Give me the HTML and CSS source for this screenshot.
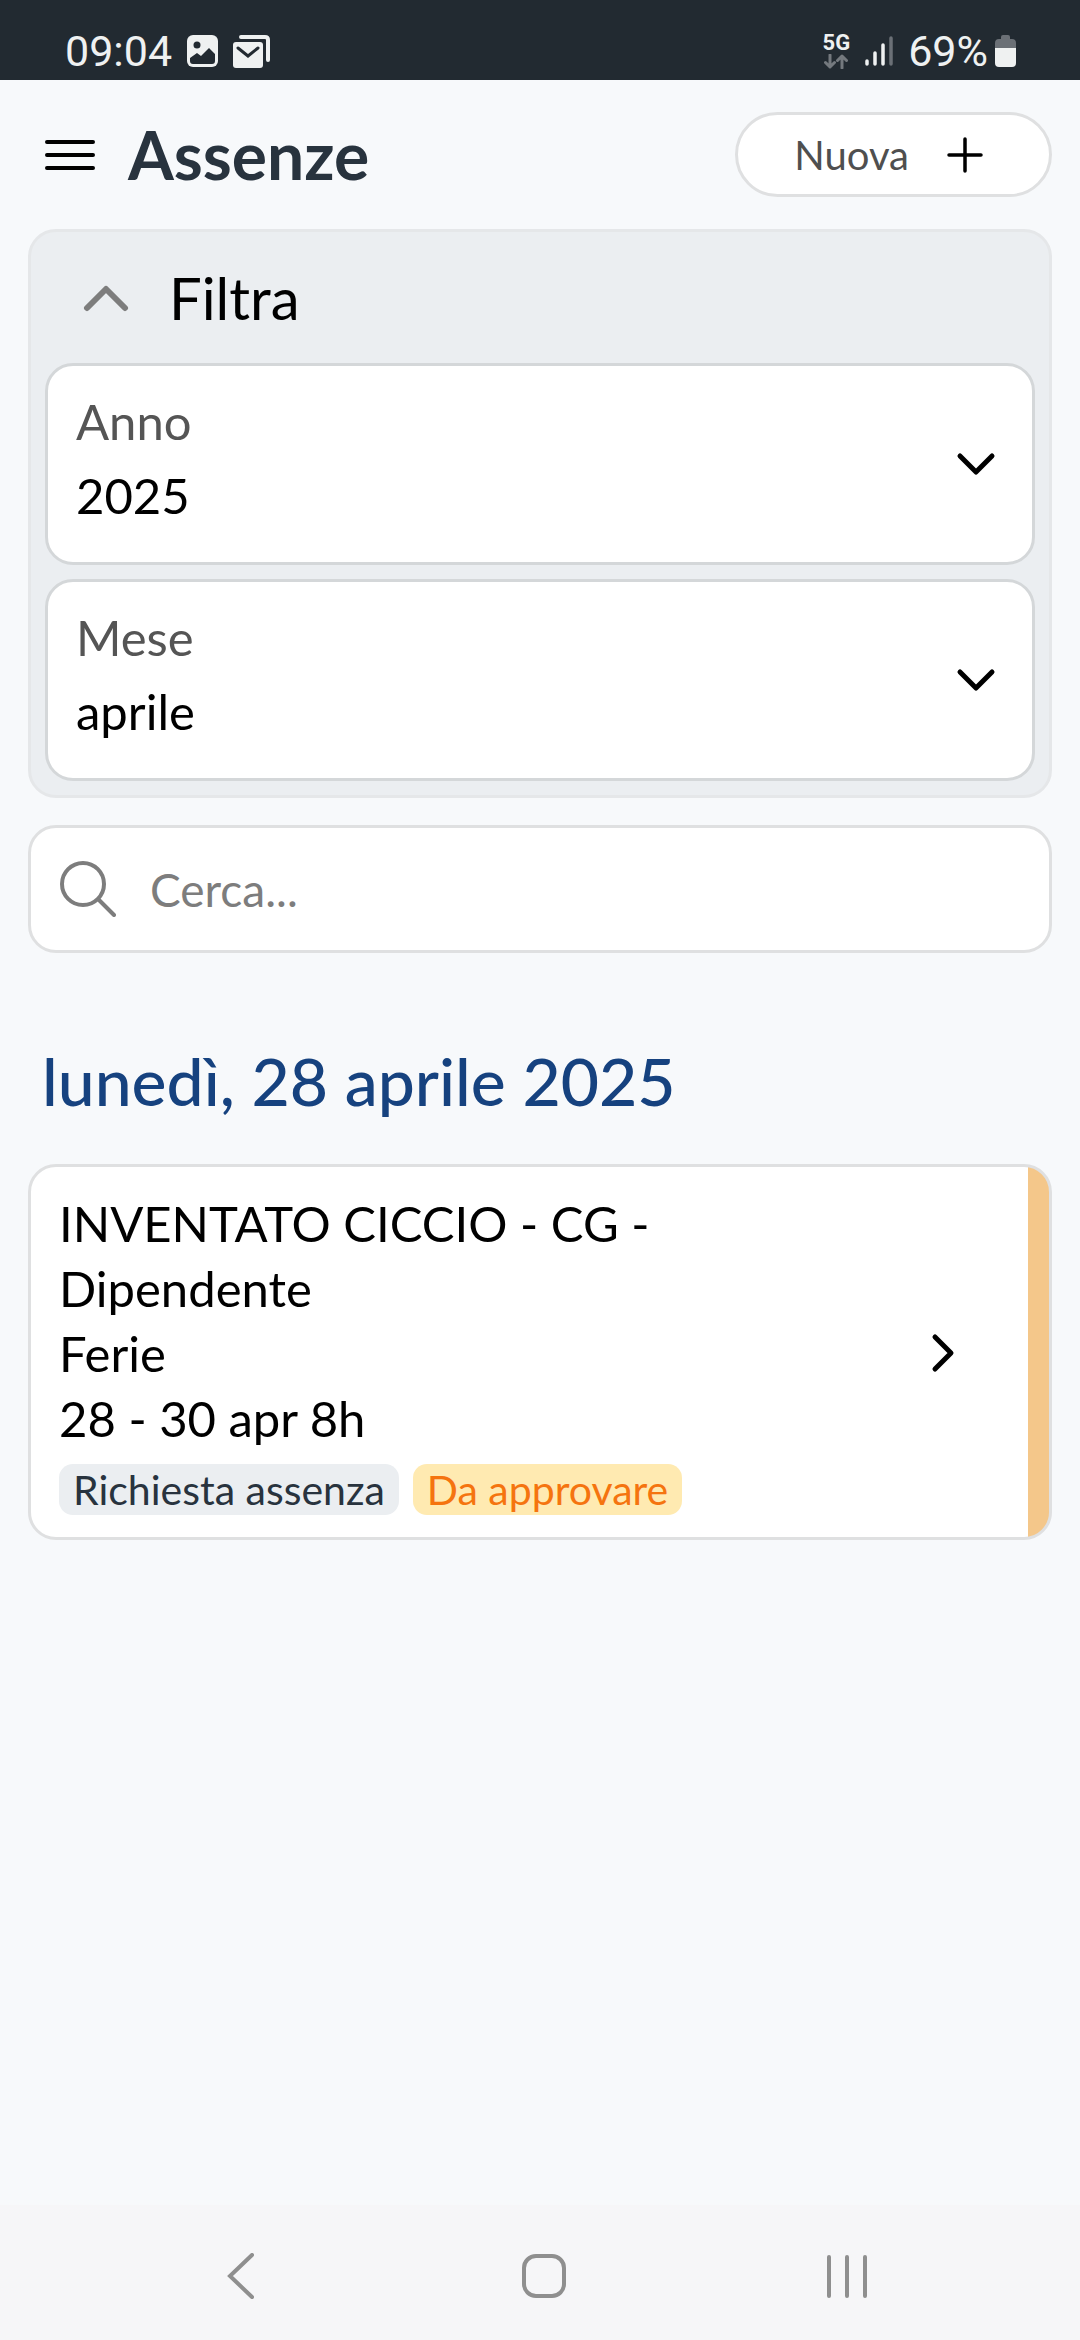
FILE: index.html
```
<!DOCTYPE html>
<html lang="it">

<head>
  <meta charset="UTF-8">
  <meta name="viewport" content="width=device-width, initial-scale=1.0">
  <title>Assenze</title>
  <link rel="stylesheet" href="styles.css">
</head>

<body>

  <div class="statusBar">
    <div class="statusLeft">
      <span>09:04</span>
      <svg width="31" height="32" viewBox="0 0 31 32">
        <rect width="31" height="32" rx="6" fill="#eff1f1"/>
        <circle cx="10" cy="10" r="3.5" fill="#222a31"/>
        <path d="M3 23l7-5 4 3 8-8 6 6v7q0 3-3 3H6q-3 0-3-3z" fill="#222a31"/>
      </svg>
      <svg width="37" height="33" viewBox="0 0 37 33">
        <path d="M8 2h24q3 0 3 3v20" fill="none" stroke="#eff1f1" stroke-width="4" stroke-linecap="round"/>
        <rect y="7" width="30" height="26" rx="3" fill="#eff1f1"/>
        <path d="M5 13l10 8 10-8" fill="none" stroke="#222a31" stroke-width="3" stroke-linecap="round"/>
      </svg>
    </div>
    <div class="statusRight">
      <div class="network">
        <span>5G</span>
        <svg width="24" height="15" viewBox="0 0 24 15" fill="none" stroke="#74797e" stroke-width="3" stroke-linecap="round" stroke-linejoin="round">
          <path d="M6 1v12M1.500 8.500L6 13l4.500-4.500M18 14V2M13.500 6.500L18 2l4.500 4.500"/>
        </svg>
      </div>
      <svg width="28" height="30" viewBox="0 0 28 30" stroke="#eff1f1" stroke-width="3.500" stroke-linecap="round">
        <path d="M2 25v3M10 17v11M18 9v19"/>
        <path d="M26 2v26" stroke="#6b7076"/>
      </svg>
      <span>69%</span>
      <svg class="battery" width="21" height="32" viewBox="0 0 21 32">
        <path d="M6 4V2q0-2 2-2h5q2 0 2 2v2h2q4 0 4 4v5H0V8q0-4 4-4z" fill="#6b7076"/>
        <path d="M0 13h21v15q0 4-4 4H4q-4 0-4-4z" fill="#eff1f1"/>
      </svg>
    </div>
  </div>

  <header>
    <button type="button" class="menuButton" aria-label="Menu">
      <svg width="52" height="32" viewBox="0 0 52 32" stroke="#000" stroke-width="4" stroke-linecap="round">
        <path d="M3 3h46M3 16h46M3 29h46"/>
      </svg>
    </button>
    <h1>Assenze</h1>
    <button type="button" class="newButton">
      Nuova
      <svg width="36" height="36" viewBox="0 0 36 36" stroke="#000" stroke-width="3.500" stroke-linecap="round">
        <path d="M2 18h32M18 2v32"/>
      </svg>
    </button>
  </header>

  <main>
    <section class="filters">
      <button type="button" class="filterToggle" aria-expanded="true">
        <svg width="46" height="28" viewBox="0 0 46 28" fill="none" stroke="#7d7d7d" stroke-width="6" stroke-linecap="round" stroke-linejoin="round">
          <path d="M4 24L23 5l19 19"/>
        </svg>
        Filtra
      </button>

      <div class="field">
        <div class="fieldText">
          <label for="anno">Anno</label>
          <select id="anno" name="anno">
            <option selected>2025</option>
          </select>
        </div>
        <svg width="40" height="24" viewBox="0 0 40 24" fill="none" stroke="#000" stroke-width="5" stroke-linecap="round" stroke-linejoin="round">
          <path d="M4 4l16 16L36 4"/>
        </svg>
      </div>

      <div class="field">
        <div class="fieldText">
          <label for="mese">Mese</label>
          <select id="mese" name="mese">
            <option selected>aprile</option>
          </select>
        </div>
        <svg width="40" height="24" viewBox="0 0 40 24" fill="none" stroke="#000" stroke-width="5" stroke-linecap="round" stroke-linejoin="round">
          <path d="M4 4l16 16L36 4"/>
        </svg>
      </div>
    </section>

    <div class="search">
      <svg width="56" height="56" viewBox="0 0 56 56" fill="none" stroke="#7d7d7d" stroke-width="4" stroke-linecap="round">
        <circle cx="23" cy="23" r="21"/>
        <path d="M39 39l15 15"/>
      </svg>
      <input type="text" id="cerca" name="cerca" placeholder="Cerca..." aria-label="Cerca">
    </div>

    <h2>lunedì, 28 aprile 2025</h2>

    <a href="#" class="absence">
      <div class="absenceText">
        <div>INVENTATO CICCIO - CG - Dipendente</div>
        <div>Ferie</div>
        <div>28 - 30 apr 8h</div>
        <div class="tags">
          <span class="tag">Richiesta assenza</span>
          <span class="tag pending">Da approvare</span>
        </div>
      </div>
      <svg width="24" height="40" viewBox="0 0 24 40" fill="none" stroke="#000" stroke-width="5" stroke-linecap="round" stroke-linejoin="round">
        <path d="M4 4l16 16L4 36"/>
      </svg>
    </a>
  </main>

  <nav>
    <button type="button" aria-label="Indietro">
      <svg width="46" height="46" viewBox="0 0 46 46" fill="none" stroke="#8f8f8f" stroke-width="4" stroke-linecap="round">
        <path d="M34 2L12 23l22 21"/>
      </svg>
    </button>
    <button type="button" aria-label="Home">
      <svg width="46" height="46" viewBox="0 0 46 46" fill="none" stroke="#8f8f8f" stroke-width="4">
        <rect x="3" y="3" width="40" height="40" rx="12"/>
      </svg>
    </button>
    <button type="button" aria-label="Recenti">
      <svg width="46" height="46" viewBox="0 0 46 46" stroke="#8f8f8f" stroke-width="4" stroke-linecap="round">
        <path d="M5 4v39M23 4v39M41 4v39"/>
      </svg>
    </button>
  </nav>

</body>

</html>
```
FILE: styles.css
```
* {
  box-sizing: border-box;
}

body {
  margin: 0;
  min-height: 100vh;
  display: flex;
  flex-direction: column;
  background-color: #f7f9fb;
  color: #000;
  font-family: Lato, "Open Sans", sans-serif;
  font-size: 49px;
}

svg {
  display: block;
  flex-shrink: 0;
}

button {
  padding: 0;
  border: none;
  background: none;
  font-family: inherit;
  color: inherit;
}

/* phone status bar */
.statusBar {
  display: flex;
  justify-content: space-between;
  height: 80px;
  padding: 22px 64px 0 65px;
  background-color: #222a31;
  color: #eff1f1;
  font-family: Roboto, sans-serif;
  font-size: 43px;
}

.statusLeft,
.statusRight {
  display: flex;
  align-items: center;
  gap: 15px;
}

.network {
  display: flex;
  flex-direction: column;
  align-items: center;
  gap: 2px;
  font-size: 22px;
  font-weight: 700;
  line-height: 18px;
}

.battery {
  margin-left: -8px;
}

header {
  display: flex;
  align-items: center;
  padding: 32px 28px;
}

.menuButton {
  padding: 0 16px;
}

h1 {
  margin: 0 auto 0 16px;
  color: #28333e;
  font-size: 66px;
  font-weight: 700;
  line-height: 80px;
}

.newButton {
  display: flex;
  align-items: center;
  gap: 38px;
  height: 85px;
  padding: 0 66px 0 56px;
  border: 3px solid #dfe0e1;
  border-radius: 43px;
  background-color: #fff;
  color: #4f4f4f;
  font-size: 40px;
}

main {
  flex: 1;
  padding: 0 28px;
}

.filters {
  display: flex;
  flex-direction: column;
  gap: 14px;
  padding: 14px;
  border: 3px solid #e5e7e9;
  border-radius: 28px;
  background-color: #ebeef1;
}

.filterToggle {
  display: flex;
  align-items: center;
  gap: 40px;
  height: 103px;
  padding-left: 38px;
  font-size: 58px;
}

.field {
  display: flex;
  align-items: center;
  padding: 18px 36px 30px 28px;
  border: 3px solid #d4d7d9;
  border-radius: 28px;
  background-color: #fff;
}

.field svg {
  margin-top: 12px;
}

.fieldText {
  flex: 1;
}

.field label {
  display: block;
  color: #555;
  line-height: 74px;
}

.field select {
  display: block;
  width: 100%;
  height: 74px;
  padding: 0;
  border: none;
  background: none;
  color: #000;
  font: inherit;
  appearance: none;
}

.search {
  display: flex;
  align-items: center;
  gap: 34px;
  height: 128px;
  margin-top: 27px;
  padding: 0 29px;
  border: 3px solid #dfe0e1;
  border-radius: 28px;
  background-color: #fff;
}

.search input {
  flex: 1;
  min-width: 0;
  padding: 0;
  border: none;
  background: none;
  font-family: inherit;
  font-size: 46px;
}

.search input::placeholder {
  color: #7d7d7d;
}

h2 {
  margin: 86px 14px 42px;
  color: #16427f;
  font-size: 66px;
  font-weight: 500;
  line-height: 83px;
}

.absence {
  display: flex;
  align-items: center;
  justify-content: space-between;
  padding: 24px 94px 22px 28px;
  border: 3px solid #dfe0e1;
  border-radius: 28px;
  /* coloured strip on the right edge */
  background: linear-gradient(#f4c78a, #f4c78a) right / 21px 100% no-repeat #fff;
  color: #000;
  line-height: 65px;
  text-decoration: none;
}

.absenceText {
  max-width: 720px;
}

.tags {
  display: flex;
  gap: 14px;
  margin-top: 13px;
}

.tag {
  padding: 0 14px;
  border-radius: 14px;
  background-color: #ebeef1;
  color: #28333e;
  font-size: 41px;
  line-height: 51px;
}

.pending {
  background-color: #ffeab1;
  color: #f5740f;
}

/* phone navigation bar */
nav {
  display: flex;
  justify-content: space-between;
  padding: 48px 164px 41px 172px;
  background-color: #f6f6f8;
}

nav button {
  padding: 0 46px;
}
```
